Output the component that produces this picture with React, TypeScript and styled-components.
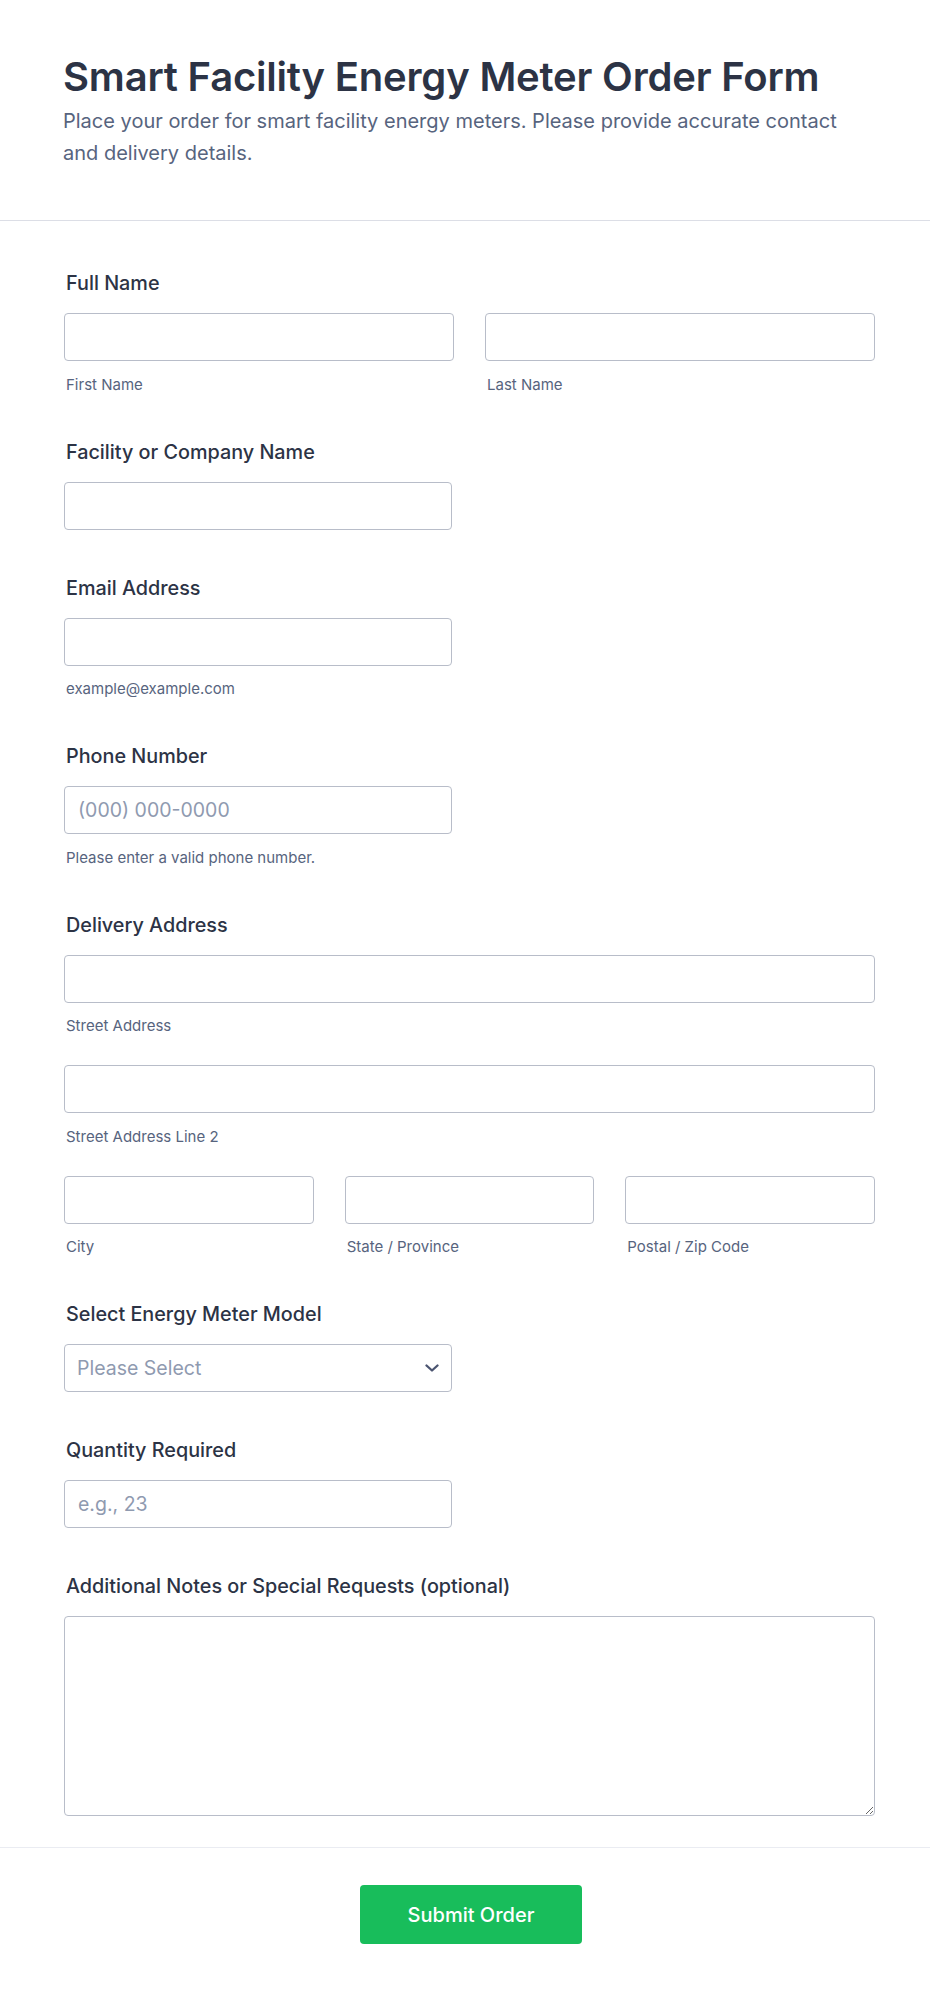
import styled, { createGlobalStyle } from "styled-components";

const GlobalStyle = createGlobalStyle`
  body {
    margin: 0;
    background: #fff;
    font-family: Inter, "Noto Sans", sans-serif;
    color: #2c3345;
  }
  * { box-sizing: border-box; }
`;

const Chevron = () => (
  <ChevronIcon width="14" height="8" viewBox="0 0 14 8" fill="none">
    <path d="M1.5 1.5 7 6.5l5.5-5" stroke="#4b5470" strokeWidth="2.3" strokeLinecap="round" strokeLinejoin="round" />
  </ChevronIcon>
);

export default function App() {
  return (
    <Page>
      <GlobalStyle />
      <Header>
        <Title>Smart Facility Energy Meter Order Form</Title>
        <Subtitle>
          Place your order for smart facility energy meters. Please provide accurate contact and delivery details.
        </Subtitle>
      </Header>

      <Form onSubmit={(e) => e.preventDefault()}>
        <Field>
          <Label>Full Name</Label>
          <Row $cols={2}>
            <Part>
              <Input type="text" />
              <SubLabel>First Name</SubLabel>
            </Part>
            <Part>
              <Input type="text" />
              <SubLabel>Last Name</SubLabel>
            </Part>
          </Row>
        </Field>

        <Field>
          <Label>Facility or Company Name</Label>
          <Input type="text" $half />
        </Field>

        <Field>
          <Label>Email Address</Label>
          <Input type="email" $half />
          <SubLabel>example@example.com</SubLabel>
        </Field>

        <Field>
          <Label>Phone Number</Label>
          <Input type="tel" placeholder="(000) 000-0000" $half />
          <SubLabel>Please enter a valid phone number.</SubLabel>
        </Field>

        <Field>
          <Label>Delivery Address</Label>
          <Stack>
            <Part>
              <Input type="text" />
              <SubLabel>Street Address</SubLabel>
            </Part>
            <Part>
              <Input type="text" />
              <SubLabel>Street Address Line 2</SubLabel>
            </Part>
            <Row $cols={3}>
              <Part>
                <Input type="text" />
                <SubLabel>City</SubLabel>
              </Part>
              <Part>
                <Input type="text" />
                <SubLabel>State / Province</SubLabel>
              </Part>
              <Part>
                <Input type="text" />
                <SubLabel>Postal / Zip Code</SubLabel>
              </Part>
            </Row>
          </Stack>
        </Field>

        <Field>
          <Label>Select Energy Meter Model</Label>
          <SelectWrap>
            <Select defaultValue="">
              <option value="" disabled>
                Please Select
              </option>
              <option>Single-Phase Smart Meter</option>
              <option>Three-Phase Smart Meter</option>
            </Select>
            <Chevron />
          </SelectWrap>
        </Field>

        <Field>
          <Label>Quantity Required</Label>
          <Input type="number" placeholder="e.g., 23" $half />
        </Field>

        <Field>
          <Label>Additional Notes or Special Requests (optional)</Label>
          <TextArea />
        </Field>
      </Form>

      <Footer>
        <SubmitButton type="submit">Submit Order</SubmitButton>
      </Footer>
    </Page>
  );
}

// Styles
const Page = styled.div`
  width: 930px;
  min-height: 1995px;
  background: #fff;
`;

const Header = styled.header`
  padding: 53px 55px 51px 63px;
  border-bottom: 1px solid #dcdee6;
`;

const Title = styled.h1`
  margin: 0;
  font-size: 40px;
  line-height: 48px;
  font-weight: 600;
  color: #2c3345;
  letter-spacing: -0.2px;
`;

const Subtitle = styled.p`
  margin: 4px 0 0;
  font-size: 20px;
  line-height: 32px;
  font-weight: 400;
  color: #57647e;
`;

const Form = styled.form`
  display: flex;
  flex-direction: column;
  gap: 46px;
  padding: 50px 55px 31px 64px;
`;

const Field = styled.div`
  display: flex;
  flex-direction: column;
  align-items: flex-start;

  & > * {
    align-self: stretch;
  }
`;

const Label = styled.label`
  padding-left: 2px;
  margin-bottom: 18px;
  font-size: 19.8px;
  line-height: 24px;
  font-weight: 500;
  color: #2c3345;
`;

const Row = styled.div<{ $cols: number }>`
  display: grid;
  grid-template-columns: repeat(${(p) => p.$cols}, 1fr);
  column-gap: 31px;
`;

const Stack = styled.div`
  display: flex;
  flex-direction: column;
  gap: 30px;
`;

const Part = styled.div`
  display: flex;
  flex-direction: column;
`;

const Input = styled.input<{ $half?: boolean }>`
  width: ${(p) => (p.$half ? "388px" : "100%")};
  height: 48px;
  padding: 0 13px;
  border: 1px solid #b8bdc9;
  border-radius: 4px;
  background: #fff;
  font-family: inherit;
  font-size: 19.5px;
  color: #2c3345;
  outline: none;

  &::placeholder {
    color: #8f9ab0;
  }

  &::-webkit-outer-spin-button,
  &::-webkit-inner-spin-button {
    -webkit-appearance: none;
    margin: 0;
  }
  -moz-appearance: textfield;
`;

const SubLabel = styled.span`
  display: block;
  margin-top: 14.5px;
  padding-left: 2px;
  font-size: 15px;
  line-height: 18px;
  color: #57647e;
`;

const SelectWrap = styled.div`
  position: relative;
  width: 388px;
`;

const Select = styled.select`
  width: 100%;
  height: 48px;
  padding: 0 40px 0 12px;
  border: 1px solid #b8bdc9;
  border-radius: 4px;
  background: #fff;
  appearance: none;
  font-family: inherit;
  font-size: 19.5px;
  color: #8f9ab0;
  outline: none;
`;

const ChevronIcon = styled.svg`
  position: absolute;
  right: 13px;
  top: 20px;
  pointer-events: none;
`;

const TextArea = styled.textarea`
  width: 100%;
  height: 200px;
  padding: 12px 13px;
  border: 1px solid #b8bdc9;
  border-radius: 4px;
  font-family: inherit;
  font-size: 18px;
  color: #2c3345;
  outline: none;
  resize: vertical;
`;

const Footer = styled.div`
  display: flex;
  justify-content: center;
  padding: 37px 52px 50px 64px;
  border-top: 1px solid #eaecf2;
`;

const SubmitButton = styled.button`
  width: 222px;
  height: 59px;
  border: none;
  border-radius: 4px;
  background: #18bd5b;
  color: #fff;
  font-family: inherit;
  font-size: 20px;
  font-weight: 500;
  cursor: pointer;
`;
